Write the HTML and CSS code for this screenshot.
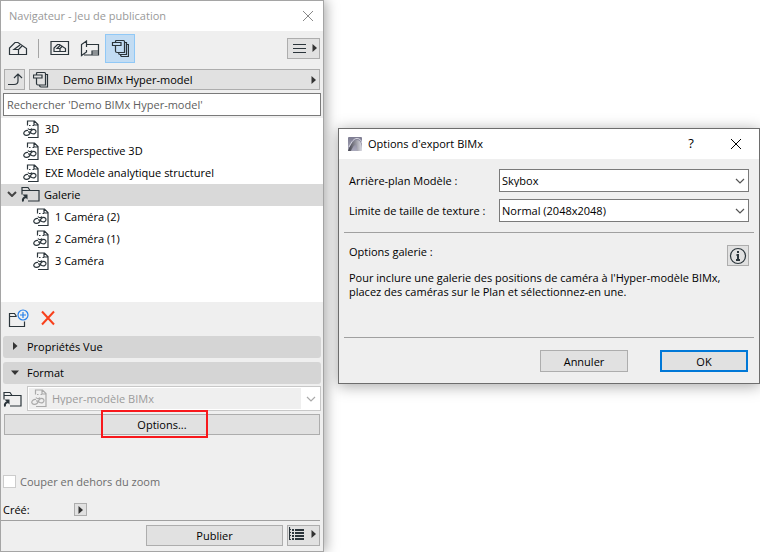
FILE: index.html
```html
<!DOCTYPE html>
<html lang="fr">
<head>
<meta charset="utf-8">
<title>Navigateur - Jeu de publication</title>
<link rel="stylesheet" href="styles.css">
</head>
<body>
<svg class="defs" aria-hidden="true">
  <symbol id="i-view" viewBox="0 -1 16 19">
    <path d="M4.500 5.500V1h7l3.500 3.500V17.500H5M11 1v4h4M6 5.500h1.500M9.500 5.500h1.500" />
    <path d="M5 10.500c-2.300-.3-4.500 1-4.200 3.200.3 2 3.600 2.300 5.200.8 1.500-1.400 1.200-3.500 3-4.600 1.700-1 4-.2 4 1.600 0 2-2.300 3-4.200 2-1.300-.6-1.700-1.800-3.800-1.500" />
    <path d="M5 8.500c1 1.500 3.500 1.500 4 0" />
  </symbol>
  <symbol id="i-folder" viewBox="0 0 19 16">
    <path d="M1 8.500V1.500h6l2 3h9v10.500H7M1 4.500h8" />
    <path class="thick" d="M2 15.500c-.5-2.500.5-4 3-4.500" /><path class="dark" d="M1.500 8.500h5v5z" />
  </symbol>
  <symbol id="i-set" viewBox="0 0 18 18">
    <path d="M4.500 3.500V2.500q0-1 1-1h7q1 0 1 1v11H6q-1.500 0-1.500-1.500V6.500M1.500 3.500h8.500v3h-8.500zM13.500 3.500h2v12H9q-1.500 0-1.500-2M15.500 5.500h2v12H11q-1.500 0-1.500-2" />
  </symbol>
  <symbol id="i-set-small" viewBox="0 0 18 18">
    <path d="M3.500 4V2.500q0-1 1-1h7q1 0 1 1v11.500H5q-1.500 0-1.500-1.500V7M.5 4h8.500v3h-8.500zM12.500 3.500h2v12.500H8q-1.500 0-1.500-2" />
  </symbol>
  <symbol id="i-right" viewBox="0 0 5 8"><path class="solid" d="M.5 0v8L5 4z" /></symbol>
  <symbol id="i-down" viewBox="0 0 10 6"><path d="M1 1l4 4 4-4" /></symbol>
</svg>
<main class="desktop">
  <section class="panel">
    <header class="titlebar muted">
      <h1>Navigateur - Jeu de publication</h1>
      <button class="close" aria-label="Fermer"><svg width="12" height="12" viewBox="0 0 12 12"><path d="M1 1l10 10M11 1L1 11" /></svg></button>
    </header>
    <nav class="toolbar">
      <button class="tool" aria-label="Plan du projet"><svg width="20" height="16" viewBox="0 0 20 16"><path d="M1.500 14.500V8L7 2.500h3l8.500 6v6zM10.500 14.500V9.500l4-4M10.500 9.500h-4.500l6-4.500" /></svg></button>
      <span class="divider"></span>
      <button class="tool" aria-label="Plan des vues"><svg width="20" height="16" viewBox="0 0 20 16"><path d="M1 1.500h17.500v13H1zM4 11.500V8l3.500-3.500h2l6 4v3zM10 11.500V8.500l2.500-2.500M10 8.500H7l3-3" /></svg></button>
      <button class="tool" aria-label="Carnet de mises en page"><svg width="20" height="17" viewBox="0 0 20 17"><path d="M6.500 4.500V1L1.500 4.500V15.500L6.500 12V10M6.500 4.500H18.500V15H4M6.500 4.500V7M12 15v-4h6.500M12 13h6.500" /></svg></button>
      <button class="tool active" aria-label="Jeux de publication"><svg width="18" height="18"><use href="#i-set" /></svg></button>
      <button class="button split" aria-label="Menu"><svg width="13" height="11" viewBox="0 0 13 11"><path d="M0 1.500h13M0 5.500h13M0 9.500h13" /></svg><svg width="5" height="8"><use href="#i-right" /></svg></button>
    </nav>
    <div class="path">
      <button class="button up" aria-label="Niveau supérieur"><svg width="16" height="15" viewBox="0 0 16 15"><path d="M1 12.500h6c2.500 0 4-1 4-3.500V2M7 6l4-4 4 4" /></svg></button>
      <button class="button current"><svg width="18" height="18"><use href="#i-set-small" /></svg><span>Demo BIMx Hyper-model</span><svg class="end" width="5" height="8"><use href="#i-right" /></svg></button>
    </div>
    <input class="search" type="search" aria-label="Rechercher" placeholder="Rechercher 'Demo BIMx Hyper-model'">
    <ul class="tree">
      <li><svg width="16" height="19"><use href="#i-view" /></svg>3D</li>
      <li><svg width="16" height="19"><use href="#i-view" /></svg>EXE Perspective 3D</li>
      <li><svg width="16" height="19"><use href="#i-view" /></svg>EXE Modèle analytique structurel</li>
      <li class="selected"><svg class="chevron" width="10" height="6"><use href="#i-down" /></svg><svg width="19" height="16"><use href="#i-folder" /></svg>Galerie</li>
      <li class="child"><svg width="16" height="19"><use href="#i-view" /></svg>1 Caméra (2)</li>
      <li class="child"><svg width="16" height="19"><use href="#i-view" /></svg>2 Caméra (1)</li>
      <li class="child"><svg width="16" height="19"><use href="#i-view" /></svg>3 Caméra</li>
    </ul>
    <div class="actions">
      <button aria-label="Nouveau dossier"><svg width="21" height="19" viewBox="0 0 21 19"><path d="M8.500 7.500l-2-3h-5v13h15v-5M1.500 7.500h7" /><g class="blue"><circle cx="15" cy="6" r="5" /><path d="M12 6h6M15 3v6" /></g></svg></button>
      <button aria-label="Supprimer"><svg class="red" width="14" height="16" viewBox="0 0 14 16"><path d="M1 1.500l12 13M13 1.500l-12 13" /></svg></button>
    </div>
    <button class="section" aria-expanded="false"><svg width="5" height="8"><use href="#i-right" /></svg><span>Propriétés Vue</span></button>
    <button class="section" aria-expanded="true"><svg width="8" height="5" viewBox="0 0 8 5"><path class="solid" d="M0 .5h8L4 5z" /></svg><span>Format</span></button>
    <div class="format">
      <svg width="19" height="16"><use href="#i-folder" /></svg>
      <div class="combo disabled">
        <svg class="lead" width="16" height="19"><use href="#i-view" /></svg>
        <select aria-label="Format" disabled><option>Hyper-modèle BIMx</option></select>
        <svg class="arrow" width="10" height="6"><use href="#i-down" /></svg>
      </div>
    </div>
    <div class="options"><button class="button">Options...</button><span class="highlight"></span></div>
    <label class="check"><input type="checkbox" disabled>Couper en dehors du zoom</label>
    <div class="created"><span>Créé:</span><button class="button mini" aria-label="Détails"><svg width="5" height="8"><use href="#i-right" /></svg></button></div>
    <footer class="publish">
      <button class="button">Publier</button>
      <button class="button split list" aria-label="Options de publication"><svg width="15" height="14" viewBox="0 0 15 14"><path d="M.5 0v12.500M0 2.500h2M0 5.500h2M0 8.500h2M0 12.500h2" /><path class="bold" d="M3 3h2M3 6h2M3 9h2M3 12h2M6 3h9M6 6h9M6 9h9M6 12h9" /></svg><svg width="5" height="8"><use href="#i-right" /></svg></button>
    </footer>
  </section>

  <section class="dialog" role="dialog" aria-labelledby="dialog-title">
    <header class="titlebar">
      <svg class="logo" width="14" height="14" viewBox="0 0 14 14"><defs><linearGradient id="g" x2="0" y2="1"><stop stop-color="#7d7c91" /><stop offset="1" stop-color="#aaa9bb" /></linearGradient><linearGradient id="h" x2="1"><stop stop-color="#3d3d49" /><stop offset="1" stop-color="#dddde5" /></linearGradient></defs><rect width="14" height="14" rx="1" fill="url(#g)" stroke="none" /><path d="M0 14C2 8 5 3 9 3c3 0 5 3 5 11H9C9 10 9 7 7 8c-2 1-3 4-4 6z" fill="url(#h)" stroke="none" /><path d="M1 10C4 4 6 1.500 9 1.500c3 0 4.500 2 5 5" stroke="#d5d5df" /></svg>
      <h2 id="dialog-title">Options d'export BIMx</h2>
      <button class="help" aria-label="Aide">?</button>
      <button class="close" aria-label="Fermer"><svg width="12" height="12" viewBox="0 0 12 12"><path d="M1 1l10 10M11 1L1 11" /></svg></button>
    </header>
    <div class="fields">
      <label for="sky">Arrière-plan Modèle :</label>
      <div class="combo"><select id="sky"><option>Skybox</option></select><svg class="arrow" width="10" height="6"><use href="#i-down" /></svg></div>
      <label for="tex">Limite de taille de texture :</label>
      <div class="combo"><select id="tex"><option>Normal (2048x2048)</option></select><svg class="arrow" width="10" height="6"><use href="#i-down" /></svg></div>
    </div>
    <div class="gallery">
      <div class="gallery-head"><h3>Options galerie :</h3><button class="button info" aria-label="Informations"><svg width="18" height="18" viewBox="0 0 18 18"><circle cx="9" cy="9" r="7.500" /><path class="bold" d="M9 4v2M7.500 8H9v5M7 13h4" /></svg></button></div>
      <p>Pour inclure une galerie des positions de caméra à l'Hyper-modèle BIMx,<br>placez des caméras sur le Plan et sélectionnez-en une.</p>
    </div>
    <footer class="dialog-actions"><button class="button">Annuler</button><button class="button primary">OK</button></footer>
  </section>
</main>
</body>
</html>
```
FILE: styles.css
```css
* { box-sizing: border-box; }
body { margin: 0; background: #fff; color: #000; font: 11px/13px "Open Sans", "Noto Sans", sans-serif; }
h1, h2, h3, p, ul { margin: 0; padding: 0; font: inherit; }
button, input, select { font: inherit; color: inherit; margin: 0; }
button { display: flex; align-items: center; justify-content: center; padding: 0; border: 0; background: none; }
svg { flex: none; fill: none; stroke: #2b353b; stroke-width: 1.2; }
.defs { position: absolute; width: 0; height: 0; }
.solid { fill: #333; stroke: none; }
.dark { fill: #2b353b; stroke: none; }
.bold { stroke-width: 2; }
.thick { stroke-width: 2; }

.desktop { display: grid; grid-template-columns: 324px minmax(0, 1fr); gap: 14px; min-height: 100vh; align-items: start; overflow: hidden; }
.panel { display: flex; flex-direction: column; min-height: 100vh; background: #efefef; border: 1px solid #a5a5a5; box-shadow: 2px 0 12px rgba(0, 0, 0, .35); }
.titlebar { display: flex; align-items: center; height: 30px; padding-bottom: 1px; background: #fff; }
.titlebar h1, .titlebar h2 { flex: 1; }
.muted { padding: 0 9px 1px 8px; color: #999; }
.titlebar svg { stroke-width: 1; stroke: #000; }
.muted svg { stroke: #888; }

.button { height: 21px; background: #e1e1e1; border: 1px solid #adadad; }
.split { width: 33px; gap: 6px; padding-left: 2px; }
.toolbar { display: flex; align-items: center; height: 38px; padding: 0 3px 4px 2px; }
.tool { width: 30px; height: 29px; }
.tool.active { background: #c2dcf3; border: 1px solid #90c8f6; }
.divider { width: 1px; height: 19px; margin: 0 6px 0 5px; background: #a5a5a5; }
.toolbar .split { margin-left: auto; }
.path { display: flex; gap: 4px; padding: 0 3px; }
.up { width: 21px; }
.current { flex: 1; justify-content: flex-start; padding: 0 3px; gap: 12px; }
.current .end { margin-left: auto; }
.search { appearance: none; height: 23px; margin: 3px 2px 2px; padding: 0 3px; border: 1px solid #7a7a7a; border-radius: 0; background: #fff; }
.search::placeholder { color: #606060; opacity: 1; }

.tree { list-style: none; height: 184px; background: #fff; }
.tree li { display: flex; align-items: center; gap: 6px; height: 22px; padding: 0 0 2px 22px; }
.tree li.child { padding-left: 32px; }
.tree li.selected { gap: 4px; padding-left: 6px; background: #d9d9d9; }
.tree .chevron { stroke-width: 2; stroke: #444; }
.actions { display: flex; align-items: center; gap: 12px; height: 34px; padding: 0 7px 2px; }
.blue { stroke: #2680eb; }
.red { stroke: #f8401c; stroke-width: 2; }
.section { justify-content: flex-start; height: 22px; margin: 0 2px 4px; padding: 0 8px 2px; background: #d5d5d5; border-radius: 3px; }
.section svg { width: 8px; }
.section span { margin-left: 8px; }
.format { display: flex; align-items: center; gap: 5px; margin: -2px 2px 3px 2px; }
.combo { position: relative; flex: 1; display: flex; }
.combo select { appearance: none; flex: 1; height: 23px; padding: 0 24px 0 2px; border: 1px solid #7a7a7a; border-radius: 0; background: #fff; }
.combo .arrow { position: absolute; right: 4px; top: 9px; stroke: #555; }
.combo.disabled { padding: 1px 19px 1px 1px; border: 1px solid #c8c8c8; background: #fff; }
.combo.disabled select { height: 21px; padding: 0 0 0 23px; border: 0; background: #efefef; color: #9b9b9b; opacity: 1; }
.combo.disabled svg { stroke: #aaa; }
.combo .lead { position: absolute; left: 3px; top: 1px; }
.options { position: relative; padding: 0 3px; }
.options .button { width: 100%; }
.highlight { position: absolute; left: calc(50% - 61px); top: -4px; width: 107px; height: 28px; border: 2px solid #f8181c; }
.check { display: flex; align-items: center; gap: 4px; margin: 40px 2px 0; color: #6d6d6d; }
.check input { appearance: none; width: 13px; height: 13px; background: #fff; border: 1px solid #ccc; }
.created { display: flex; align-items: center; margin: 15px 2px 4px; }
.created span { width: 71px; }
.mini { width: 13px; height: 13px; }
.publish { display: flex; justify-content: flex-end; gap: 4px; margin-right: 3px; padding: 4px 0; border-top: 1px solid #a0a0a0; }
.publish .button:first-child { width: 137px; }
.list { padding: 0 3px 4px 0; gap: 7px; }

.dialog { margin-top: 128px; background: #efefef; border: 1px solid #6d6d6d; box-shadow: 0 2px 14px rgba(0, 0, 0, .35); }
.dialog .titlebar { padding: 0 17px 1px 9px; }
.dialog h2 { margin-left: 6px; }
.help { width: 12px; margin-right: 33px; font-size: 13px; }
.fields { display: grid; grid-template-columns: 150px 1fr; row-gap: 7px; align-items: center; margin: 0 5px; padding: 10px 5px; border-bottom: 1px solid #a0a0a0; }
.fields label { line-height: 23px; }
.gallery { margin: 0 5px; padding: 12px 5px 38px; border-bottom: 1px solid #a0a0a0; }
.gallery-head { display: flex; justify-content: space-between; }
.info { width: 22px; }
.gallery p { margin-top: 5px; line-height: 14px; }
.dialog-actions { display: flex; justify-content: flex-end; gap: 32px; padding: 12px 11px 11px; }
.dialog-actions .button { width: 88px; height: 22px; }
.dialog-actions .primary { border: 2px solid #0078d7; }
```
